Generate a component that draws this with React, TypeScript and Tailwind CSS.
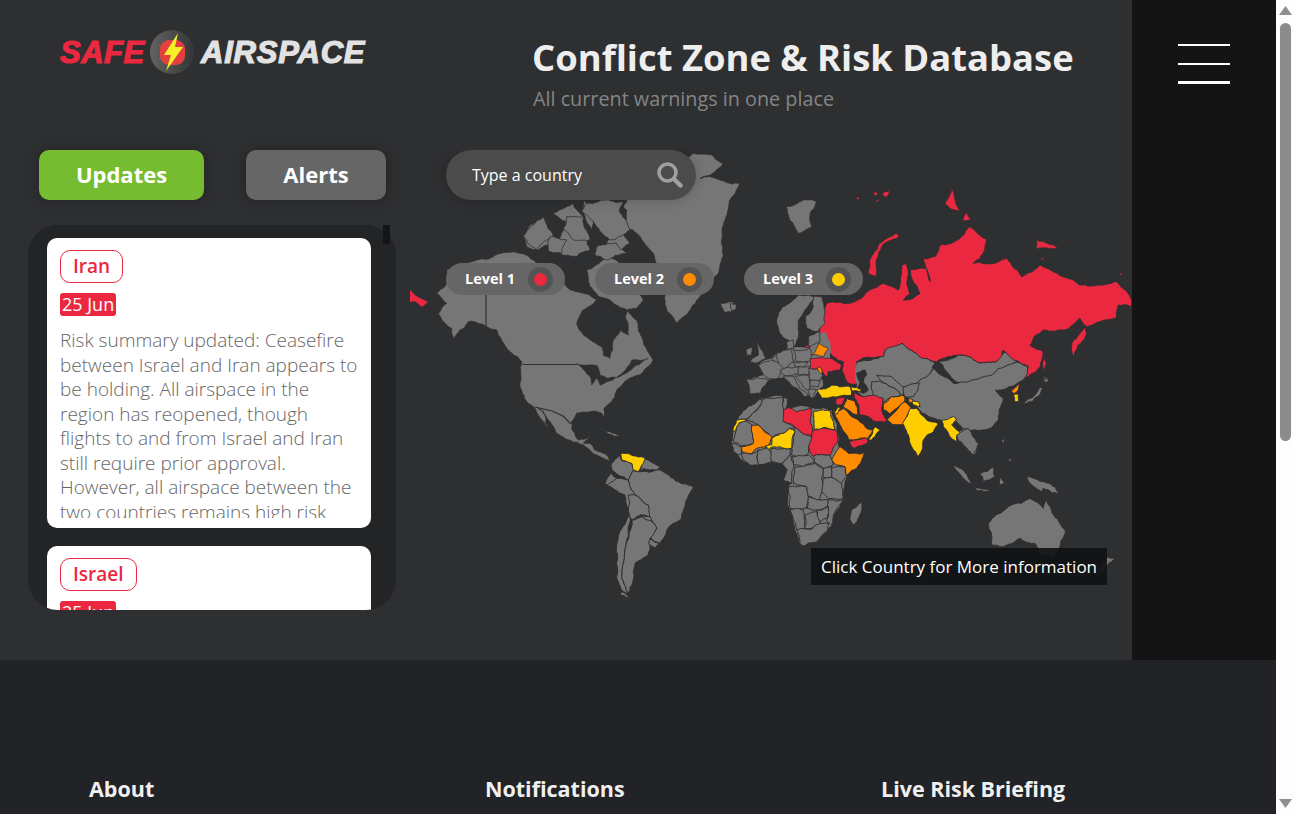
import React from "react";

const RED = "#ea283f";
const ORG = "#ff8c00";
const YEL = "#ffce00";
const LAND = "#767676";
const SEA = "#2e2f31";

type Item = [string, string?, boolean?];
type Pt = [number, number];

// deterministic pseudo noise taken from the position, so that two countries sharing an edge get the same wiggle
function noise(x: number, y: number, k: number) {
  const s = Math.sin(x * 12.9898 + y * 78.233 + k * 37.719) * 43758.5453;
  return s - Math.floor(s) - 0.5;
}

function rough(a: Pt, b: Pt, depth: number, out: Pt[]) {
  const len = Math.hypot(b[0] - a[0], b[1] - a[1]);
  if (depth === 0 || len < 8) return;
  const mx = (a[0] + b[0]) / 2;
  const my = (a[1] + b[1]) / 2;
  const kx = Math.round(mx * 2) / 2;
  const ky = Math.round(my * 2) / 2;
  const m: Pt = [mx + noise(kx, ky, 1) * len * 0.2, my + noise(kx, ky, 2) * len * 0.2];
  rough(a, m, depth - 1, out);
  out.push(m);
  rough(m, b, depth - 1, out);
}

function roughen(points: string) {
  const pts = points
    .trim()
    .split(/\s+/)
    .map((s) => s.split(",").map(Number) as Pt);
  const out: Pt[] = [];
  pts.forEach((p, i) => {
    out.push(p);
    rough(p, pts[(i + 1) % pts.length], 4, out);
  });
  return out.map((p) => `${p[0].toFixed(1)},${p[1].toFixed(1)}`).join(" ");
}

function Layer({ x, y, items, w = 1 }: { x: number; y: number; items: Item[]; w?: number }) {
  return (
    <g transform={`translate(${x} ${y}) scale(0.33333)`}>
      {items.map(([p, f, base], i) => (
        <polygon
          key={i}
          points={roughen(p)}
          fill={f || LAND}
          stroke={base ? "none" : SEA}
          strokeWidth={w}
          strokeLinejoin="round"
          vectorEffect="non-scaling-stroke"
        />
      ))}
    </g>
  );
}

const northAmerica: Item[] = [
  ["110,-30 105,20 80,40 110,70 85,100 100,125 125,145 130,180 150,150 175,125 230,140 260,150 300,215 335,245 330,320 350,365 375,385 395,420 415,445 385,385 400,395 440,460 520,495 570,530 600,545 590,525 555,510 540,490 520,490 545,465 505,480 485,445 485,425 500,400 540,395 575,400 590,430 582,385 620,330 650,300 690,285 730,240 720,225 695,170 680,120 650,90 655,165 630,150 610,180 600,235 580,225 575,200 520,165 500,130 520,90 560,60 520,40 470,20 430,-20 370,-60 330,-80 200,-60"],
  ["530,-30 590,-70 630,-50 660,10 700,60 680,85 650,90 610,70 565,50 540,20"],
  ["440,-110 470,-160 530,-130 540,-90 500,-70 455,-75"],
  ["340,-130 400,-190 430,-130 385,-90 350,-100"],
  ["430,-200 490,-230 520,-190 470,-175"],
  ["520,-240 570,-210 545,-150 530,-175"],
  ["600,-130 640,-140 660,-110 620,-80 590,-105"],
  ["360,-30 400,-40 420,-10 385,15"],
];
const naDark: Item[] = [
  ["500,250 530,255 560,255 570,285 595,295 620,292 665,240 715,235 675,258 635,286 600,303 570,316 560,295 545,315 540,290 515,262", SEA],
];
const greenland: Item[] = [
  ["640,200 650,180 700,150 850,40 905,45 940,70 925,85 870,115 900,110 990,130 960,180 945,240 935,300 925,400 890,440 860,480 800,550 770,510 740,400 730,340 690,290 640,260 650,210"],
  ["530,190 640,185 628,212 660,270 600,300 570,275 545,240 515,215"],
  ["470,230 520,230 540,300 490,300 460,265"],
  ["340,290 400,230 430,290 380,330"],
  ["420,290 470,300 455,340 415,335"],
  ["560,320 620,310 650,340 590,360 555,345"],
  ["930,490 970,485 980,505 945,518"],
];
const arctic: Item[] = [
  ["50,110 100,90 140,95 120,130 125,170 85,190 60,150"],
  ["255,78 270,85 262,90", RED],
  ["310,65 325,72 315,78", RED],
  ["335,72 360,62 350,82", RED],
  ["318,90 330,88 322,96", RED],
  ["380,190 387,200 340,222 318,270 318,320 295,310 300,270 330,220", RED],
  ["545,58 555,90 570,122 545,118 525,100 535,85", RED],
  ["590,128 603,150 578,152", RED],
  ["800,210 835,222 865,232 835,235 800,236", RED],
  ["815,262 825,268 815,270", RED],
  ["1050,308 1058,312 1048,316", RED],
];
const asia: Item[] = [
  ["260,575 340,555 345,535 395,520 430,545 495,578 470,630 400,645 385,660 330,660 310,620 280,610 270,600"],
  ["505,575 565,555 620,575 680,575 705,545 725,550 740,575 690,600 680,625 600,645 545,625"],
  ["820,620 838,625 825,640"],
  ["150,470 170,400 240,400 340,340 385,360 395,285 410,280 410,340 420,370 400,390 450,370 420,300 470,295 480,335 460,265 495,260 510,225 570,205 600,170 650,210 640,250 610,280 710,265 755,320 810,285 880,320 930,345 990,345 1040,335 1085,390 1085,410 1045,405 1040,440 950,470 930,445 880,480 820,480 780,525 820,545 810,590 760,630 775,590 730,570 700,540 680,575 620,575 565,555 500,575 430,545 395,520 345,540 340,560 260,575 262,610 270,640 235,640 215,600 220,575 190,560 175,545 145,515", RED],
  ["905,520 945,470 950,490 912,562", RED],
  ["822,545 830,580 824,608 818,575", RED],
];
const europe: Item[] = [
  ["85,225 125,205 140,190 185,175 240,175 235,140 285,125 300,205 270,260 280,285 250,325 235,315 190,290 160,262 115,270 90,310 60,312 48,268 100,255", LAND, true],
  ["0,40 20,45 18,58 5,62"],
  ["190,30 160,50 140,90 150,130 175,150 195,170 205,140 205,90 240,40 255,20 235,15 205,15"],
  ["250,20 275,20 285,60 285,100 265,125 230,115 225,80 250,50"],
  ["170,155 190,150 190,175 170,178"],
  ["235,140 270,125 270,155 235,170"],
  ["80,155 95,180 108,205 75,220 60,215 85,195"],
  ["48,180 68,172 65,195 50,198"],
  ["125,205 142,190 150,225 135,215"],
  ["140,190 185,175 190,215 165,240 150,235"],
  ["190,178 240,175 243,205 235,215 195,212"],
  ["85,225 125,210 160,235 145,265 115,265 100,255"],
  ["48,268 100,265 115,270 90,310 60,312"],
  ["150,240 205,230 210,250 160,255"],
  ["190,215 235,215 225,230 195,230"],
  ["205,230 240,230 235,255 205,255"],
  ["235,235 265,235 278,255 270,270 240,270"],
  ["160,258 190,258 200,280 235,315 225,320 190,290 170,270"],
  ["195,258 238,258 240,298 230,300"],
  ["240,272 272,272 265,290 240,290"],
  ["235,298 258,298 250,325 240,320"],
  ["240,205 285,205 305,205 335,225 330,240 295,245 290,260 270,235 240,235", RED],
  ["245,195 265,160 295,175 280,200", ORG],
  ["262,232 272,232 278,248 272,250", ORG],
  ["225,166 238,167 238,172 226,172", RED],
];
const africaME: Item[] = [
  ["178,178 250,172 262,175 258,205 340,205 395,212 410,270 415,320 445,340 495,338 470,385 440,408 430,475 400,525 395,555 380,575 350,605 310,618 300,610 280,540 268,508 265,440 275,430 250,420 262,390 245,372 215,365 175,375 150,375 115,345 95,310 100,270 110,240 140,205", LAND, true],
  ["470,70 640,60 700,85 620,165 552,190 490,170 470,150", LAND, true],
  ["178,178 140,205 110,240 137,238 175,205 190,180"],
  ["190,178 250,172 252,245 285,262 270,265 250,280 215,292 175,255 140,240 175,205"],
  ["250,172 262,175 258,205 252,210"],
  ["108,272 118,248 137,243 155,255 160,310 125,318 100,305"],
  ["95,310 125,320 125,340 115,345 100,335"],
  ["125,340 155,342 175,330 175,375 150,375 130,360"],
  ["175,330 205,322 215,340 215,365 175,375"],
  ["215,325 275,325 270,345 245,370 215,365"],
  ["285,262 325,285 338,295 325,320 325,340 300,355 275,345 275,325"],
  ["275,350 325,345 345,365 310,380 280,375"],
  ["245,372 270,345 282,380 275,430 250,420 262,390"],
  ["340,348 390,345 400,375 370,385 345,368"],
  ["395,385 435,380 440,410 425,430 395,410"],
  ["368,385 395,380 395,410 370,412"],
  ["285,380 345,370 368,385 370,440 360,480 320,465 320,440 280,430"],
  ["370,415 395,412 425,432 430,475 385,475 365,455"],
  ["265,440 320,440 325,470 320,505 270,505"],
  ["325,470 360,480 385,480 385,498 350,510 322,505"],
  ["268,508 310,510 315,565 290,570 280,540"],
  ["315,525 350,515 360,550 335,565 315,565"],
  ["385,480 430,480 400,525 395,555 380,545 385,505"],
  ["350,510 385,500 380,535 360,545"],
  ["290,570 335,568 360,550 385,550 380,575 350,605 310,618 300,610"],
  ["485,485 478,530 462,555 450,540 455,510"],
  ["620,165 650,130 700,85 760,130 840,115 895,85 951,66 984,81 969,120 945,135 905,150 885,150 910,175 895,240 870,265 820,270 790,270 770,245 720,240 680,225 640,195"],
  ["515,125 555,130 605,165 580,170 552,185 520,165"],
  ["530,105 575,110 625,150 605,165 555,130"],
  ["610,140 660,130 640,170 615,170"],
  ["470,100 495,90 500,105 490,125 505,150 490,160 470,150 480,125", SEA],
  ["770,280 800,265 830,320 825,345 805,320 790,310"],
  ["250,210 265,203 290,215 335,205 340,285 325,285 285,262 250,245", RED],
  ["342,213 390,212 405,268 342,268", YEL],
  ["340,270 407,270 410,310 390,345 340,348 325,320 335,295", RED],
  ["395,360 420,320 445,340 495,338 470,385 440,408 435,380 410,375", ORG],
  ["155,255 175,255 215,290 205,320 170,325 155,340 125,335 125,320 160,310", ORG],
  ["250,280 270,265 285,275 275,325 240,320 205,328 195,318 215,315 215,295", YEL],
  ["97,272 110,240 137,238 137,243 118,248 108,272", YEL],
  ["350,150 395,135 450,140 455,165 400,170 365,175", YEL],
  ["452,140 470,142 485,148 480,155 455,152", YEL],
  ["400,215 430,205 450,225 475,240 500,265 520,270 505,295 460,300 445,300 420,255", ORG],
  ["447,305 500,295 505,305 460,325", RED],
  ["505,300 525,260 542,270 525,290 515,300", YEL],
  ["430,200 440,175 465,185 475,225 460,222", ORG],
  ["408,175 435,172 425,195 410,197", RED],
  ["462,155 490,170 520,165 550,175 545,210 560,245 530,245 480,225 470,185", RED],
  ["402,220 415,200 420,205 412,222", YEL],
  ["552,190 575,170 610,165 615,180 590,205 570,222 550,210", ORG],
  ["560,240 590,210 615,185 635,205 620,230 610,255 575,252", ORG],
  ["608,250 630,205 650,205 680,240 715,250 700,275 670,300 655,352 635,320 625,285", YEL],
  ["725,243 760,228 770,240 755,255 785,280 770,290 770,305 750,290 740,270", YEL],
  ["635,185 655,185 660,200 640,195", YEL],
  ["625,175 640,180 635,188 625,185", ORG],
];
const pacific: Item[] = [
  ["20,195 55,175 85,220 70,255 40,225 25,210"],
  ["10,285 40,300 70,345 45,330"],
  ["90,310 130,290 135,320 100,335"],
  ["150,320 165,340 150,345"],
  ["155,210 165,205 160,225"],
  ["175,265 187,270 178,276"],
  ["70,350 130,365 80,362"],
  ["230,320 250,325 330,372 280,355 275,365 245,345"],
  ["115,460 185,405 215,400 240,385 280,415 290,390 345,480 330,530 310,560 270,555 255,520 210,505 160,530 125,525"],
  ["470,560 495,565 465,600 435,620 455,590"],
  ["215,103 245,95 270,75 278,55 270,52 255,75 225,95"],
  ["280,25 298,30 285,40"],
  ["185,65 210,40 205,60 190,70", ORG],
  ["192,72 205,72 205,95 193,95", YEL],
];
const southAmerica: Item[] = [
  ["335,250 360,225 365,242 395,250 400,272 385,300 355,285 335,270"],
  ["315,310 335,280 350,295 330,320"],
  ["320,315 350,295 385,300 405,345 385,385 375,345 360,340"],
  ["435,235 480,262 470,270 430,265 420,272"],
  ["420,275 480,270 510,290 580,320 555,380 545,415 500,450 480,490 450,470 470,445 445,410 445,375 405,345 385,300 400,272"],
  ["385,345 405,345 445,375 450,410 420,405 395,420 385,390"],
  ["425,405 450,410 470,445 445,435"],
  ["385,395 392,420 375,510 365,590 385,640 365,630 350,590"],
  ["395,420 425,410 470,445 450,475 445,525 405,550 400,600 385,640 365,590 375,510"],
  ["450,478 480,490 465,503 448,495"],
  ["365,635 395,665 360,645"],
  ["300,145 330,155 360,170 325,162"],
  ["362,222 385,220 435,232 430,250 415,275 400,270 395,250 365,240", YEL],
  ["362,166 367,166 367,170 362,170", RED],
];

function WorldMap() {
  return (
    <svg className="block w-full h-full" viewBox="410 150 722 510" aria-hidden="true">
      <Layer x={410} y={280} items={northAmerica} w={0.8} />
      <Layer x={410} y={280} items={naDark} w={0.5} />
      <path d="M486 295V326M523 364.5H577" fill="none" stroke={SEA} strokeWidth="1.2" />
      <path d="M535 407L552 411L563 416L571 424" fill="none" stroke={SEA} strokeWidth="1.2" />
      <Layer x={410} y={140} items={greenland} w={0.8} />
      <Layer x={500} y={380} items={southAmerica} />
      <Layer x={770} y={170} items={asia} />
      <Layer x={770} y={170} items={arctic} w={0.5} />
      <Layer x={730} y={290} items={europe} w={0.8} />
      <Layer x={700} y={340} items={africaME} />
      <Layer x={950} y={370} items={pacific} w={0.9} />
      <polygon points="410,290 416,296 428,302 422,307 415,301 410,302" fill={RED} />
    </svg>
  );
}

function Logo() {
  return (
    <div className="flex items-center h-[46px] font-['Liberation_Sans',Arial,sans-serif] italic font-bold text-[31px] leading-none">
      <span className="text-[#ea283f] w-[91px] tracking-[0.5px] [-webkit-text-stroke:1.2px_#ea283f]">SAFE</span>
      <svg width="46" height="46" viewBox="0 0 46 46" className="-ml-[1px]">
        <defs>
          <linearGradient id="lg" x1="0" x2="1" y1="0" y2="0">
            <stop offset="0" stopColor="#626262" />
            <stop offset="1" stopColor="#353637" />
          </linearGradient>
        </defs>
        <circle cx="22" cy="23" r="22" fill="url(#lg)" />
        <rect x="10" y="11" width="25" height="25" rx="9" fill="#e54040" />
        <polygon points="28,4 14,26 21,26 16,42 33,18 25,18" fill="#f6f02b" />
      </svg>
      <span className="text-[#e2e2e2] ml-[5px] tracking-[0.8px] [-webkit-text-stroke:1.2px_#e2e2e2]">AIRSPACE</span>
    </div>
  );
}

function Card({ tag, date, text }: { tag: string; date: string; text: React.ReactNode }) {
  return (
    <div className="bg-white rounded-[10px] px-[13px] pt-[12px] h-[290px] shrink-0 overflow-hidden">
      <div className="inline-block border border-[#ea283f] rounded-[10px] px-[12px] h-[33px] leading-[31px] text-[19px] font-semibold text-[#ea283f]">
        {tag}
      </div>
      <div className="mt-[10px] w-fit bg-[#ea283f] rounded-[3px] px-[2px] h-[23px] leading-[23px] text-[18px] text-white">{date}</div>
      <div className="mt-[12px] h-[190px] overflow-hidden text-[19px] leading-[24.5px] font-light text-[#666666] whitespace-nowrap">
        {text}
      </div>
    </div>
  );
}

function Legend({ label, color }: { label: string; color: string }) {
  return (
    <div className="w-[119px] h-[32px] rounded-[16px] bg-[#666666] flex items-center pl-[19px] pr-[12px] justify-between">
      <span className="text-[14.5px] font-bold text-white">{label}</span>
      <span className="w-[25px] h-[25px] rounded-full bg-[#545454] flex items-center justify-center">
        <span className="w-[13px] h-[13px] rounded-full" style={{ background: color }} />
      </span>
    </div>
  );
}

function Scrollbar() {
  return (
    <div className="w-[19px] h-full bg-[#fdfdfd] flex flex-col items-center shrink-0">
      <svg width="13" height="9" viewBox="0 0 13 9" className="mt-[6px] shrink-0">
        <polygon points="6.5,0 13,9 0,9" fill="#8f8f8f" />
      </svg>
      <div className="mt-[8px] w-[11px] h-[418px] rounded-[6px] bg-[#8c8c8c]" />
      <div className="flex-1" />
      <svg width="13" height="9" viewBox="0 0 13 9" className="mb-[6px] shrink-0">
        <polygon points="0,0 13,0 6.5,9" fill="#8f8f8f" />
      </svg>
    </div>
  );
}

export default function App() {
  return (
    <div className="flex w-full h-[814px] overflow-hidden font-['Open_Sans','Noto_Sans',sans-serif]">
      <div className="w-[1276px] shrink-0 flex flex-col">
        <div className="flex h-[660px] shrink-0">
          <div className="w-[1132px] bg-[#2e2f31] flex flex-col">
            <header className="h-[150px] flex shrink-0">
              <div className="w-[533px] pl-[60px] pt-[29px]">
                <Logo />
              </div>
              <div className="pt-[33px] -ml-[1px]">
                <h1 className="text-[36.4px] leading-[48px] font-bold text-[#eeeeee] whitespace-nowrap">
                  Conflict Zone &amp; Risk Database
                </h1>
                <p className="mt-[6px] ml-[1px] text-[19.8px] leading-[24px] text-[#858585]">All current warnings in one place</p>
              </div>
            </header>
            <div className="flex flex-1 min-h-0">
              <div className="w-[410px] shrink-0 flex flex-col">
                <div className="flex pl-[39px] gap-[42px]">
                  <button className="w-[165px] h-[50px] pb-[2px] rounded-[10px] bg-[#76bc31] text-white text-[22px] font-bold shadow-[0_0_14px_rgba(0,0,0,0.25)]">
                    Updates
                  </button>
                  <button className="w-[140px] h-[50px] pb-[2px] rounded-[10px] bg-[#666666] text-white text-[22px] font-bold shadow-[0_0_14px_rgba(0,0,0,0.25)]">
                    Alerts
                  </button>
                </div>
                <div className="relative ml-[28px] mt-[25px] w-[368px] h-[385px]">
                  <div className="w-full h-full rounded-[30px] bg-[#232426] overflow-hidden pl-[19px] pr-[25px] pt-[13px] flex flex-col gap-[18px]">
                    <Card
                      tag="Iran"
                      date="25 Jun"
                      text={
                        <>
                          Risk summary updated: Ceasefire
                          <br />
                          between Israel and Iran appears to
                          <br />
                          be holding. All airspace in the
                          <br />
                          region has reopened, though
                          <br />
                          flights to and from Israel and Iran
                          <br />
                          still require prior approval.
                          <br />
                          However, all airspace between the
                          <br />
                          two countries remains high risk
                        </>
                      }
                    />
                    <Card tag="Israel" date="25 Jun" text="Risk summary updated" />
                  </div>
                  <div className="absolute right-[6px] top-0 w-[7px] h-[19px] bg-[#141516]" />
                </div>
              </div>
              <div className="relative flex-1 min-w-0 overflow-hidden">
                <WorldMap />
                <div className="absolute left-[36px] top-0 w-[250px] h-[50px] rounded-[25px] bg-[#4b4b4b] shadow-[0_0_14px_rgba(0,0,0,0.2)] flex items-center justify-between pl-[26px] pr-[13px]">
                  <span className="text-[16px] text-white">Type a country</span>
                  <svg width="26" height="26" viewBox="0 0 26 26" fill="none" stroke="#a0a0a0" strokeWidth="3.5">
                    <circle cx="10.5" cy="10.5" r="8.5" />
                    <path d="M17 17L23.5 23.5" strokeWidth="4.5" strokeLinecap="round" />
                  </svg>
                </div>
                <div className="absolute left-[36px] top-[113px] flex gap-[30px]">
                  <Legend label="Level 1" color={RED} />
                  <Legend label="Level 2" color={ORG} />
                  <Legend label="Level 3" color={YEL} />
                </div>
                <div className="absolute left-[401px] top-[398px] w-[296px] h-[37px] bg-[#111214]/90 flex items-center pl-[10px] text-[17px] text-white whitespace-nowrap">
                  Click Country for More information
                </div>
              </div>
            </div>
          </div>
          <div className="flex-1 bg-[#141414] relative">
            <div className="pl-[46px] pt-[44px] flex flex-col">
              <span className="block w-[52px] h-[2px] bg-white" />
              <span className="block w-[52px] h-[2px] bg-white mt-[17px]" />
              <span className="block w-[52px] h-[3px] bg-white mt-[16px]" />
            </div>
          </div>
        </div>
        <footer className="flex-1 bg-[#222326] grid grid-cols-[396px_396px_1fr] pl-[89px] pt-[113px] text-[21.5px] font-bold text-[#f0f0f0]">
          <h2>About</h2>
          <h2>Notifications</h2>
          <h2>Live Risk Briefing</h2>
        </footer>
      </div>
      <Scrollbar />
    </div>
  );
}
